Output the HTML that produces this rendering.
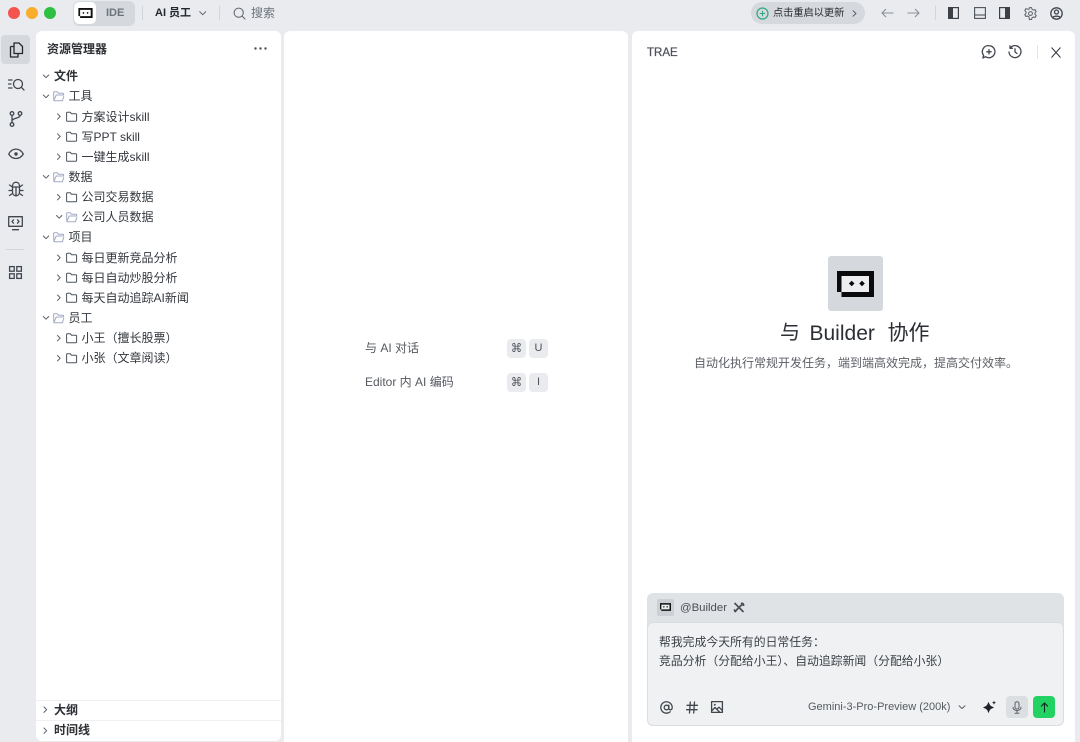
<!DOCTYPE html>
<html><head><meta charset="utf-8"><style>
*{box-sizing:border-box}
html,body{margin:0;padding:0}
body{width:1080px;height:742px;position:relative;overflow:hidden;background:#e9ebef;font-family:"Liberation Sans","Noto Sans CJK SC",sans-serif;font-size:12px;color:#33383e}
.a{position:absolute}
.t{position:absolute;white-space:nowrap;line-height:16px}
.p{position:absolute;background:#fff}
svg{position:absolute;overflow:visible}
.s{fill:none;stroke:#41464d;stroke-width:1.3;stroke-linecap:round;stroke-linejoin:round}
.c{fill:none;stroke:#5b6067;stroke-width:1;stroke-linecap:round;stroke-linejoin:round}
.k{position:absolute;width:19px;height:19px;background:#e9ebee;border-radius:4px;text-align:center;line-height:19px;font-size:11px;color:#4a4f55}
.k.m{font-size:9px;font-weight:700;color:#33383e;-webkit-text-stroke:.3px #33383e}
.b{font-weight:700}
</style></head><body>
<!-- traffic lights -->
<div class="a" style="left:8px;top:7px;width:12px;height:12px;border-radius:50%;background:#f4544d"></div>
<div class="a" style="left:26px;top:7px;width:12px;height:12px;border-radius:50%;background:#f8ae2c"></div>
<div class="a" style="left:44px;top:7px;width:12px;height:12px;border-radius:50%;background:#2dc043"></div>
<!-- IDE switch -->
<div class="a" style="left:73px;top:1px;width:62px;height:25px;background:#d5d9dd;border-radius:6px"></div>
<div class="a" style="left:74px;top:2px;width:22px;height:22px;background:#fff;border-radius:5px"></div>
<svg style="left:78px;top:8px" width="15" height="10" viewBox="0 0 37 26"><path fill-rule="evenodd" d="M0 0H37V26H4.500V21H0ZM4.500 5H32V21H4.500Z" fill="#111"/><path d="M13 10l2.700 2.700L13 15.500l-2.700-2.800zM24 10l2.700 2.700L24 15.500l-2.700-2.800z" fill="#111"/></svg>
<div class="t b" style="left:106px;top:5px;color:#6d737a;font-size:11px;font-weight:700">IDE</div>
<div class="a" style="left:142px;top:6px;width:1px;height:14px;background:#d2d5d9"></div>
<div class="t b" style="left:155px;top:5px;font-size:11px;color:#24282d">AI 员工</div>
<svg style="left:199px;top:10.500px" width="8" height="5"><path class="c" d="M.7.7l3 3 3-3"/></svg>
<div class="a" style="left:219px;top:6px;width:1px;height:14px;background:#d2d5d9"></div>
<svg style="left:233px;top:7px" width="13" height="13"><circle class="c" cx="5.700" cy="5.700" r="4.600"/><path class="c" d="M9 9l3 3"/></svg>
<div class="t" style="left:251px;top:5px;color:#6d737a">搜索</div>
<!-- update pill -->
<div class="a" style="left:751px;top:2px;width:114px;height:22px;background:#d5d9dd;border-radius:11px"></div>
<svg style="left:756px;top:7px" width="13" height="13"><circle cx="6.500" cy="6.500" r="5.500" fill="none" stroke="#2fa77e" stroke-width="1.200"/><path d="M6.500 3.800v5.400M3.800 6.500h5.400" fill="none" stroke="#2fa77e" stroke-width="1.100"/></svg>
<div class="t" style="left:773px;top:5.500px;font-size:10.200px;color:#26292e">点击重启以更新</div>
<svg style="left:852px;top:10px" width="5" height="7"><path class="c" d="M1 .8l3 2.700-3 2.700"/></svg>
<svg style="left:881px;top:8px" width="13" height="10"><path d="M1 5h11.500M5 1L1 5l4 4" fill="none" stroke="#8b9096" stroke-width="1.100"/></svg>
<svg style="left:907px;top:8px" width="13" height="10"><path d="M.5 5H12M8 1l4 4-4 4" fill="none" stroke="#8b9096" stroke-width="1.100"/></svg>
<div class="a" style="left:935px;top:6px;width:1px;height:14px;background:#d2d5d9"></div>
<svg style="left:948px;top:7px" width="11" height="12"><rect x=".6" y=".6" width="9.800" height="10.800" fill="none" stroke="#3c4148" stroke-width="1.200"/><rect x="1" y="1" width="4" height="10" fill="#3c4148"/></svg>
<svg style="left:974px;top:7px" width="12" height="12"><rect x=".6" y=".6" width="10.800" height="10.800" fill="none" stroke="#4c5259" stroke-width="1.100"/><path d="M1 8h10" stroke="#4c5259" stroke-width="1.100"/></svg>
<svg style="left:999px;top:7px" width="11" height="12"><rect x=".6" y=".6" width="9.800" height="10.800" fill="none" stroke="#3c4148" stroke-width="1.200"/><rect x="6" y="1" width="4" height="10" fill="#3c4148"/></svg>
<svg style="left:1024px;top:7px" width="13" height="13" viewBox="0 0 13 13"><path class="c" d="M5.400 1h2.200l.4 1.700 1.500.8 1.600-.5 1.100 1.900-1.200 1.200v1.700l1.200 1.200-1.100 1.900-1.600-.5-1.500.8-.4 1.700H5.400L5 10.200l-1.500-.8-1.600.5L.8 8l1.200-1.200V5.100L.8 3.900l1.100-1.900 1.600.5L5 2.700z" transform="translate(0 -.4)"/><circle class="c" cx="6.500" cy="6.500" r="1.900"/></svg>
<svg style="left:1050px;top:7px" width="13" height="13"><circle class="s" cx="6.500" cy="6.500" r="5.700"/><circle class="s" cx="6.500" cy="5" r="2"/><path class="s" d="M2.800 10.700c1-2 6.400-2 7.400 0"/></svg>

<!-- activity bar -->
<div class="a" style="left:1px;top:35px;width:29px;height:29px;background:#d5d9dd;border-radius:4px"></div>
<svg style="left:9px;top:42px" width="15" height="16"><path d="M5 1h5l3.500 3.500V11.500H5z M1.500 4.500H5 M1.500 4.500V15H9V11.500" fill="none" stroke="#25292e" stroke-width="1.300" stroke-linejoin="round"/></svg>
<svg style="left:8px;top:78px" width="17" height="13"><path class="s" d="M.6 2h3.400M.6 6h2.400M.6 10h3.400"/><circle class="s" cx="10" cy="6" r="4.500"/><path class="s" d="M13.300 9.300L16 12"/></svg>
<svg style="left:9px;top:111px" width="14" height="16"><circle class="s" cx="3" cy="2.500" r="1.800"/><circle class="s" cx="3" cy="13.500" r="1.800"/><circle class="s" cx="11" cy="2.500" r="1.800"/><path class="s" d="M3 4.500v7M11 4.500c0 3-8 2.500-8 5.500"/></svg>
<svg style="left:8px;top:148px" width="16" height="12"><path class="s" d="M.7 6c3.500-6.500 11-6.500 14.600 0-3.600 6-11 6-14.600 0z"/><circle cx="8" cy="6" r="1.700" fill="#41464d"/></svg>
<svg style="left:8px;top:180px" width="16" height="17"><path class="s" d="M4.500 6c0-5 7-5 7 0v6c0 5-7 5-7 0zM4.500 7h7M8 7v9M4.500 7L1.500 5M11.500 7l3-2M4.500 10.500H1M11.500 10.500h3.500M4.500 13.500l-3 2M11.500 13.500l3 2"/></svg>
<svg style="left:8px;top:216px" width="15" height="15"><rect class="s" x=".7" y=".7" width="13.600" height="9.600"/><path class="s" d="M4.500 13.700h6M5.500 3.800L4 5.500l1.500 1.700M9.500 3.800L11 5.500 9.500 7.200"/></svg>
<div class="a" style="left:6px;top:249px;width:18px;height:1px;background:#d2d5d9"></div>
<svg style="left:9px;top:266px" width="13" height="13"><g fill="none" stroke="#41464d" stroke-width="1.300"><rect x=".6" y=".6" width="4.600" height="4.600"/><rect x="7.800" y=".6" width="4.600" height="4.600"/><rect x=".6" y="7.800" width="4.600" height="4.600"/><rect x="7.800" y="7.800" width="4.600" height="4.600"/></g></svg>

<!-- sidebar -->
<div class="p" style="left:36px;top:31px;width:245px;height:710px;border-radius:6px"></div>
<div class="t b" style="left:47px;top:41px;color:#2c3035">资源管理器</div>
<svg style="left:254px;top:47px" width="13" height="3"><circle cx="1.500" cy="1.500" r="1.200" fill="#4c5259"/><circle cx="6.500" cy="1.500" r="1.200" fill="#4c5259"/><circle cx="11.500" cy="1.500" r="1.200" fill="#4c5259"/></svg>

<svg style="left:0;top:0" width="300" height="742">
<defs>
<path id="dn" class="c" d="M0 0l2.700 2.700L5.400 0"/>
<path id="rt" class="c" d="M0 0l2.700 2.700L0 5.400"/>
<path id="cl" d="M.6 1.600q0-.8.800-.8h2.900l1.200 1.400h4.300q.8 0 .8.800v5.900q0 .8-.8.800H1.400q-.8 0-.800-.800z" fill="none" stroke="#4c5259" stroke-width="1"/>
<path id="op" d="M.6 1.600q0-.8.800-.8h2.900l1.200 1.400h4.300q.8 0 .8.800v1H3.200L.8 9.700zM.8 9.700h8.600l1.500-4.700" fill="none" stroke="#a3a9c4" stroke-width="1"/>
</defs>
<use href="#dn" x="43.300" y="75"/>
<use href="#dn" x="43.300" y="95"/><use href="#op" x="53" y="91"/>
<use href="#rt" x="57.500" y="113.800"/><use href="#cl" x="66" y="111.500"/>
<use href="#rt" x="57.500" y="133.800"/><use href="#cl" x="66" y="131.500"/>
<use href="#rt" x="57.500" y="154"/><use href="#cl" x="66" y="151.500"/>
<use href="#dn" x="43.300" y="175.500"/><use href="#op" x="53" y="172"/>
<use href="#rt" x="57.500" y="194.500"/><use href="#cl" x="66" y="192"/>
<use href="#dn" x="56.500" y="215.500"/><use href="#op" x="66" y="212"/>
<use href="#dn" x="43.300" y="236"/><use href="#op" x="53" y="232"/>
<use href="#rt" x="57.500" y="255"/><use href="#cl" x="66" y="252.500"/>
<use href="#rt" x="57.500" y="275"/><use href="#cl" x="66" y="272.500"/>
<use href="#rt" x="57.500" y="295"/><use href="#cl" x="66" y="292.500"/>
<use href="#dn" x="43.300" y="316.500"/><use href="#op" x="53" y="313"/>
<use href="#rt" x="57.500" y="335.500"/><use href="#cl" x="66" y="333"/>
<use href="#rt" x="57.500" y="355.500"/><use href="#cl" x="66" y="353"/>
<use href="#rt" x="44" y="707"/>
<use href="#rt" x="44" y="728"/>
</svg>
<div class="t b" style="left:54px;top:68px;color:#2c3035">文件</div>
<div class="t" style="left:68.500px;top:88px">工具</div>
<div class="t" style="left:81.500px;top:108.500px">方案设计skill</div>
<div class="t" style="left:81.500px;top:128.500px">写PPT skill</div>
<div class="t" style="left:81.500px;top:148.500px">一键生成skill</div>
<div class="t" style="left:68.500px;top:169px">数据</div>
<div class="t" style="left:81.500px;top:189px">公司交易数据</div>
<div class="t" style="left:81.500px;top:209px">公司人员数据</div>
<div class="t" style="left:68.500px;top:229px">项目</div>
<div class="t" style="left:81.500px;top:249.500px">每日更新竞品分析</div>
<div class="t" style="left:81.500px;top:269.500px">每日自动炒股分析</div>
<div class="t" style="left:81.500px;top:289.500px">每天自动追踪AI新闻</div>
<div class="t" style="left:68.500px;top:310px">员工</div>
<div class="t" style="left:81.500px;top:330px">小王（擅长股票）</div>
<div class="t" style="left:81.500px;top:350px">小张（文章阅读）</div>
<div class="a" style="left:36px;top:700px;width:245px;height:1px;background:#eef0f2"></div>
<div class="a" style="left:36px;top:720px;width:245px;height:1px;background:#eef0f2"></div>
<div class="t b" style="left:54px;top:702px;color:#2c3035">大纲</div>
<div class="t b" style="left:54px;top:722px;color:#2c3035">时间线</div>

<!-- editor -->
<div class="p" style="left:284px;top:31px;width:344px;height:711px;border-radius:6px 6px 0 0"></div>
<div class="t" style="left:365px;top:340px;color:#55595f">与 AI 对话</div>
<div class="t" style="left:365px;top:374px;color:#55595f">Editor 内 AI 编码</div>
<div class="k m" style="left:507px;top:339px">⌘</div><div class="k" style="left:529px;top:339px">U</div>
<div class="k m" style="left:507px;top:373px">⌘</div><div class="k" style="left:529px;top:373px">I</div>

<!-- right panel -->
<div class="p" style="left:632px;top:31px;width:443px;height:711px;border-radius:6px 6px 0 0"></div>
<div class="t" style="left:647px;top:45px;color:#4f5359;font-size:11.500px;-webkit-text-stroke:.25px #4f5359">TRAE</div>
<svg style="left:982px;top:45px" width="14" height="14"><path class="s" d="M7 .7a6 6 0 1 1-3.400 11L.9 13l.7-2.700A6 6 0 0 1 7 .7zM7 4.500v4.500M4.800 6.800h4.400"/></svg>
<svg style="left:1008px;top:45px" width="14" height="14"><path class="s" d="M2.200 3A6 6 0 1 1 1 7M2 .9V3.300h2.400M7 3.800V7l2 1.500"/></svg>
<div class="a" style="left:1037px;top:45px;width:1px;height:14px;background:#e3e5e8"></div>
<svg style="left:1051px;top:47px" width="10" height="11"><path d="M.5 .5l9 10M9.500 .5l-9 10" stroke="#3c4148" stroke-width="1.100" fill="none"/></svg>

<div class="a" style="left:828px;top:256px;width:55px;height:55px;background:#d5d9dd;border-radius:3px"></div>
<svg style="left:837px;top:271px" width="37" height="26" viewBox="0 0 37 26"><path d="M4.500 5H32V21H4.500Z" fill="#eceef0"/><path fill-rule="evenodd" d="M0 0H37V26H4.500V21H0ZM4.500 5H32V21H4.500Z" fill="#0b0b0b"/><path d="M14.700 9.700l2.800 2.800-2.800 2.800-2.800-2.800zM25 9.700l2.800 2.800-2.800 2.800-2.800-2.800z" fill="#0b0b0b"/></svg>
<div class="t" style="left:780px;top:320px;font-size:20px;line-height:27px;color:#2b2f34">与</div>
<div class="t" style="left:809.500px;top:320px;font-size:21px;line-height:27px;color:#2b2f34">Builder</div>
<div class="t" style="left:887.500px;top:320px;font-size:21px;line-height:27px;color:#2b2f34">协作</div>
<div class="t" style="left:694px;top:355px;color:#5b5f65">自动化执行常规开发任务，端到端高效完成，提高交付效率。</div>

<!-- input -->
<div class="a" style="left:647px;top:593px;width:417px;height:40px;background:#dfe3e6;border-radius:6px 6px 0 0"></div>
<div class="a" style="left:657px;top:599px;width:17px;height:17px;background:#ccd0d4;border-radius:2px"></div>
<svg style="left:660px;top:603px" width="11" height="8" viewBox="0 0 37 26"><path d="M4.500 5H32V21H4.500Z" fill="#eceef0"/><path fill-rule="evenodd" d="M0 0H37V26H4.500V21H0ZM4.500 5H32V21H4.500Z" fill="#111"/><path d="M13 9.500l3 3-3 3-3-3zM24 9.500l3 3-3 3-3-3z" fill="#111"/></svg>
<div class="t" style="left:680px;top:599.500px;font-size:11.400px;color:#4a4f55">@Builder</div>
<svg style="left:733px;top:602px" width="12" height="11"><path d="M1.500 1l9 9M10.500 1l-9 9M8 1l2.500 1.500 0 1.500M1 7.500L3 10" fill="none" stroke="#4a4f55" stroke-width="1.700"/></svg>
<div class="a" style="left:647px;top:622px;width:417px;height:104px;background:#eff1f3;border:1px solid #dadde1;border-radius:6px"></div>
<div class="t" style="left:659px;top:633px;line-height:18.500px;color:#3c4046;font-size:11.850px">帮我完成今天所有的日常任务：<br>竞品分析（分配给小王）、自动追踪新闻（分配给小张）</div>
<svg style="left:660px;top:701px" width="13" height="13"><path class="s" d="M10.200 10.800A5.700 5.700 0 1 1 12.200 6.500c0 3-3.400 3-3.400.6V4.200"/><circle class="s" cx="6.500" cy="6.500" r="2.300"/></svg>
<svg style="left:686px;top:701px" width="12" height="13"><path class="s" d="M1 4.300h10.500M.6 8.700h10.500M4.300 1L3.500 12M8.500 1L7.700 12"/></svg>
<svg style="left:711px;top:701px" width="12" height="12"><rect class="s" x=".6" y=".6" width="10.800" height="10.800"/><circle cx="3.800" cy="3.800" r="1" fill="#4c5259"/><path class="s" d="M1 9.500l3-3 4.500 4.500M6.500 7.500l1.500-1.300 3 3"/></svg>
<div class="t" style="left:808px;top:699px;font-size:11px;color:#565a60">Gemini-3-Pro-Preview (200k)</div>
<svg style="left:958px;top:705px" width="8" height="5"><path class="c" d="M1 .8l3 2.700L7 .8"/></svg>
<svg style="left:982px;top:700px" width="15" height="15"><path d="M6.500 2.500q.8 4.200 5 5-4.200.8-5 5-.8-4.200-5-5 4.200-.8 5-5z" fill="#1f2226" stroke="#1f2226" stroke-width=".7"/><path d="M12 .6l.6 1.500 1.500.6-1.500.6-.6 1.500-.6-1.500-1.500-.6 1.500-.6z" fill="#1f2226"/></svg>
<div class="a" style="left:1006px;top:696px;width:22px;height:22px;background:#dcdfe2;border-radius:4px"></div>
<svg style="left:1012px;top:701px" width="10" height="13"><rect class="c" x="3" y=".7" width="4" height="7.300" rx="2"/><path class="c" d="M1 6.300c0 4.300 8 4.300 8 0M5 10v2M3 12.300h4"/></svg>
<div class="a" style="left:1033px;top:696px;width:22px;height:22px;background:#22d364;border-radius:4px"></div>
<svg style="left:1040px;top:702px" width="9" height="11"><path d="M4.500 10.500V1M1 4.500L4.500 1 8 4.500" fill="none" stroke="#0e2a1b" stroke-width="1.100"/></svg>
</body></html>
